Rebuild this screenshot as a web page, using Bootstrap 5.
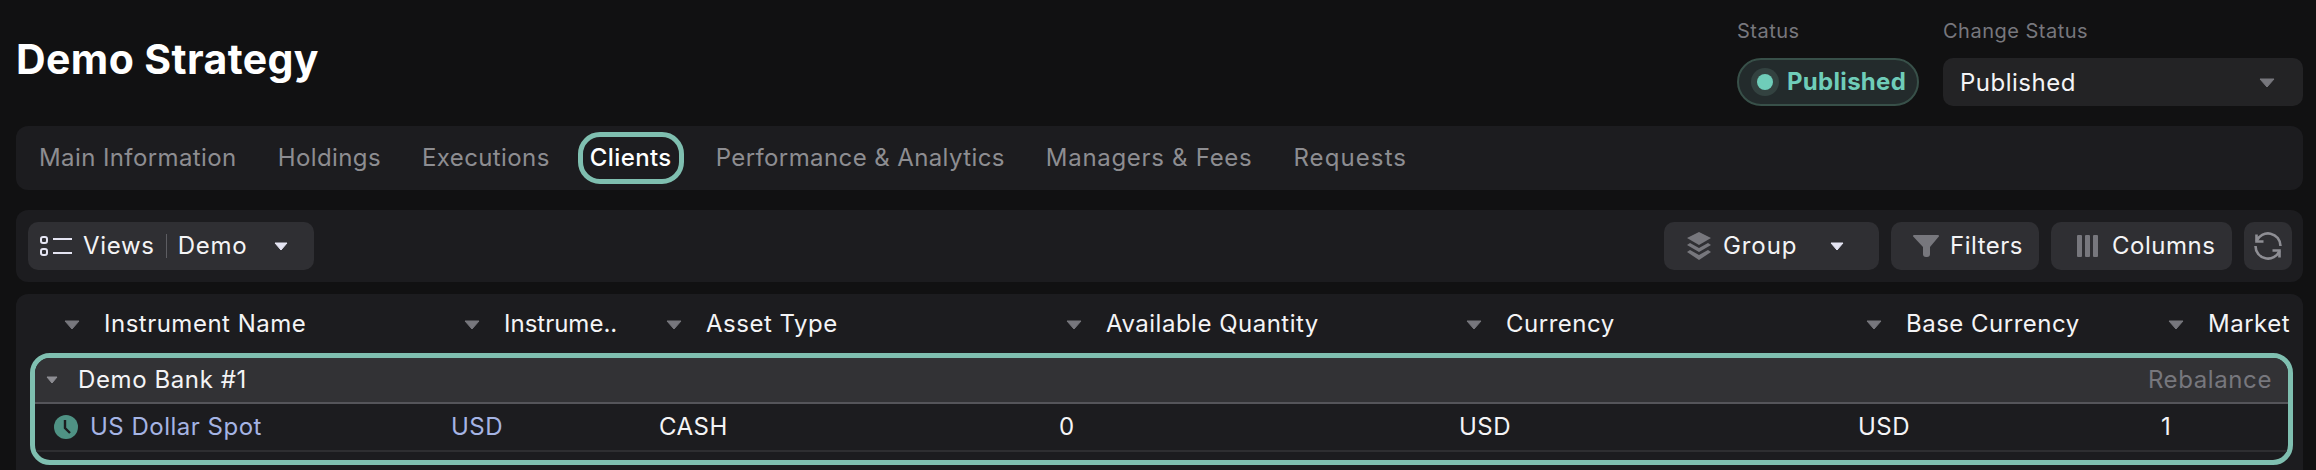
<!doctype html>
<html lang="en" data-bs-theme="dark">
<head>
<meta charset="utf-8">
<title>Demo Strategy</title>
<link href="https://cdn.jsdelivr.net/npm/bootstrap@5.3.0/dist/css/bootstrap.min.css" rel="stylesheet">
<style>
html,body{height:470px;overflow:hidden;background:#111112;}
body{font-family:Inter,"Liberation Sans",sans-serif;font-size:24px;color:#f4f4f6;padding:0 13px 0 16px;letter-spacing:.5px;}
a{text-decoration:none;}
.page-top{height:126px;}
.page-title{font-size:41px;font-weight:700;color:#fff;margin:0;letter-spacing:.4px;line-height:1;padding-left:0;margin-top:39px;}
.field-label{font-size:20px;line-height:24px;color:#77777d;margin-top:19px;margin-bottom:15px;}
.status-pill{width:182px;height:48px;border:2px solid #385049;border-radius:24px;background:#232b2c;color:#6fcdb9;font-weight:700;font-size:24px;padding-left:12px;gap:8px;letter-spacing:.3px;}
.status-ring{width:28px;height:28px;border-radius:50%;background:#334240;}
.status-dot{width:16px;height:16px;border-radius:50%;background:#6fcdb9;}
.status-select{width:360px;height:48px;background:#232325;border-radius:10px;padding:2px 28px 0 17px;}
.tab-bar{height:64px;background:#1c1c1f;border-radius:12px;padding-left:11px;margin-bottom:20px;}
.tab-item{padding:0 7px;margin-right:17px;color:#8d8d91;font-size:24px;height:52px;border:5px solid transparent;border-radius:22px;line-height:42px;letter-spacing:.4px;}
.tab-item.tab-on{border-color:#7fbfb0;color:#fff;font-weight:500;margin-left:-1px;margin-right:20px;}
.tab-item.tab-wide{letter-spacing:.7px;}
.tab-item.tab-wider{letter-spacing:1.1px;}
.tool-bar{height:72px;background:#1c1c1f;border-radius:12px;padding:0 11px 0 12px;margin-bottom:12px;}
.tool-btn{height:48px;background:#2f2f33;border-radius:10px;color:#f4f4f6;font-size:24px;}
.tool-views{width:286px;padding-left:12px;letter-spacing:.7px;}
.tool-views .views-icon{margin-right:11px;}
.tool-sep{width:1px;height:24px;background:#5d5d62;margin:0 11px;}
.tool-views .views-caret{margin-left:27px;}
.tool-group{width:215px;padding-left:22px;letter-spacing:.9px;}
.tool-group .group-icon{margin-right:11px;}
.tool-group .group-caret{margin-left:33px;}
.tool-filter{width:148px;padding-left:22px;}
.tool-filter svg{margin-right:11px;}
.tool-cols{width:181px;padding-left:26px;}
.tool-cols svg{margin-right:14px;}
.tool-refresh{width:48px;}
.table-box{height:176px;background:#1c1c1f;border-radius:12px 12px 0 0;}
.head-grid{height:59px;display:grid;grid-template-columns:400px 202px 400px 400px 400px 302px 1fr;padding-left:48px;}
.head-cell{white-space:nowrap;}
.head-cell svg{margin-right:24px;}
.head-tight{letter-spacing:0;}
.group-frame{margin:0 10px 0 14px;height:112px;border:5px solid #7fbfb0;border-radius:20px;overflow:hidden;}
.group-head{height:46px;background:#323235;border-bottom:2px solid #55555a;padding:0 16px 0 11px;letter-spacing:.6px;}
.group-head svg{margin-right:20px;}
.group-end{color:#77777d;}
.body-grid{height:48px;display:grid;grid-template-columns:397px 208px 400px 400px 399px 303px 1fr;padding-left:19px;border-bottom:2px solid #2e2e31;}
.body-grid svg{margin-right:12px;}
.inst-link{color:#a5b4e4;}
</style>
</head>
<body>
<div class="page-top d-flex justify-content-between">
  <h1 class="page-title">Demo Strategy</h1>
  <div class="d-flex" style="gap:24px">
    <div>
      <div class="field-label">Status</div>
      <div class="status-pill d-flex align-items-center">
        <span class="status-ring d-flex align-items-center justify-content-center"><span class="status-dot"></span></span>
        <span>Published</span>
      </div>
    </div>
    <div>
      <div class="field-label">Change Status</div>
      <div class="status-select d-flex align-items-center justify-content-between">
        <span>Published</span>
        <svg width="16" height="10" viewBox="0 0 16 10"><path d="M1 1h14L8 9z" fill="#77777d" stroke="#77777d" stroke-linejoin="round"/></svg>
      </div>
    </div>
  </div>
</div>

<nav class="tab-bar nav align-items-center">
  <a class="tab-item">Main Information</a>
  <a class="tab-item">Holdings</a>
  <a class="tab-item">Executions</a>
  <a class="tab-item tab-on">Clients</a>
  <a class="tab-item">Performance &amp; Analytics</a>
  <a class="tab-item tab-wide">Managers &amp; Fees</a>
  <a class="tab-item tab-wider">Requests</a>
</nav>

<div class="tool-bar d-flex align-items-center justify-content-between">
  <div class="tool-btn tool-views d-flex align-items-center">
    <svg class="views-icon" width="32" height="24" viewBox="0 0 32 24" fill="none" stroke="#e4e4f2" stroke-width="2"><rect x="1" y="3" width="6" height="6" rx="2"/><rect x="1" y="15" width="6" height="6" rx="2"/><path d="M13 5h19M13 19h19"/></svg>
    <span>Views</span><span class="tool-sep"></span><span>Demo</span>
    <svg class="views-caret" width="14" height="9" viewBox="0 0 14 9"><path d="M1 1h12L7 8z" fill="#e4e4f2" stroke="#e4e4f2" stroke-linejoin="round"/></svg>
  </div>
  <div class="d-flex" style="gap:12px">
    <div class="tool-btn tool-group d-flex align-items-center">
      <svg class="group-icon" width="26" height="28" viewBox="0 0 26 28" fill="#77777d"><path d="M13 0l12 6-12 7L1 6z"/><path d="M4 11l9 5 9-5 3 2-12 7-12-7z"/><path d="M4 18l9 5 9-5 3 2-12 8-12-8z"/></svg>
      <span>Group</span>
      <svg class="group-caret" width="14" height="9" viewBox="0 0 14 9"><path d="M1 1h12L7 8z" fill="#e4e4f2" stroke="#e4e4f2" stroke-linejoin="round"/></svg>
    </div>
    <div class="tool-btn tool-filter d-flex align-items-center">
      <svg width="26" height="22" viewBox="0 0 26 22" fill="#77777d"><path d="M1 0h24a1 1 0 0 1 .8 1.600L17 12v7a3 3 0 0 1-3 3h-1a3 3 0 0 1-3-3v-7L.2 1.600A1 1 0 0 1 1 0z"/></svg>
      <span>Filters</span>
    </div>
    <div class="tool-btn tool-cols d-flex align-items-center">
      <svg width="21" height="22" viewBox="0 0 21 22" fill="#77777d"><rect width="5" height="22" rx="1"/><rect x="8" width="5" height="22" rx="1"/><rect x="16" width="5" height="22" rx="1"/></svg>
      <span>Columns</span>
    </div>
    <div class="tool-btn tool-refresh d-flex align-items-center justify-content-center">
      <svg width="28" height="28" viewBox="0 0 28 28" fill="none" stroke="#8e8e94" stroke-width="2.600"><path d="M1.500 14A12.500 12.500 0 0 0 25.500 19"/><path d="M26.500 14A12.500 12.500 0 0 0 2.500 9"/><path d="M2.500 2.500v7h7"/><path d="M25.500 25.500v-7h-7"/></svg>
    </div>
  </div>
</div>

<div class="table-box">
  <div class="head-grid align-items-center">
    <div class="head-cell"><svg width="16" height="10" viewBox="0 0 16 10"><path d="M1 1h14L8 9z" fill="#77777d" stroke="#77777d" stroke-linejoin="round"/></svg>Instrument Name</div>
    <div class="head-cell head-tight"><svg width="16" height="10" viewBox="0 0 16 10"><path d="M1 1h14L8 9z" fill="#77777d" stroke="#77777d" stroke-linejoin="round"/></svg>Instrume..</div>
    <div class="head-cell"><svg width="16" height="10" viewBox="0 0 16 10"><path d="M1 1h14L8 9z" fill="#77777d" stroke="#77777d" stroke-linejoin="round"/></svg>Asset Type</div>
    <div class="head-cell"><svg width="16" height="10" viewBox="0 0 16 10"><path d="M1 1h14L8 9z" fill="#77777d" stroke="#77777d" stroke-linejoin="round"/></svg>Available Quantity</div>
    <div class="head-cell"><svg width="16" height="10" viewBox="0 0 16 10"><path d="M1 1h14L8 9z" fill="#77777d" stroke="#77777d" stroke-linejoin="round"/></svg>Currency</div>
    <div class="head-cell"><svg width="16" height="10" viewBox="0 0 16 10"><path d="M1 1h14L8 9z" fill="#77777d" stroke="#77777d" stroke-linejoin="round"/></svg>Base Currency</div>
    <div class="head-cell"><svg width="16" height="10" viewBox="0 0 16 10"><path d="M1 1h14L8 9z" fill="#77777d" stroke="#77777d" stroke-linejoin="round"/></svg>Market</div>
  </div>
  <div class="group-frame">
    <div class="group-head d-flex align-items-center justify-content-between">
      <div class="d-flex align-items-center">
        <svg width="12" height="8" viewBox="0 0 12 8"><path d="M1 1h10L6 7z" fill="#8d8d93" stroke="#8d8d93" stroke-linejoin="round"/></svg>
        <span>Demo Bank #1</span>
      </div>
      <span class="group-end">Rebalance</span>
    </div>
    <div class="body-grid align-items-center">
      <div class="d-flex align-items-center">
        <svg width="24" height="24" viewBox="0 0 24 24"><circle cx="12" cy="12" r="12" fill="#4f9284"/><path d="M11 5v8l5 5" fill="none" stroke="#1c1c1f" stroke-width="2.400"/></svg>
        <a class="inst-link">US Dollar Spot</a>
      </div>
      <a class="inst-link">USD</a>
      <div>CASH</div>
      <div>0</div>
      <div>USD</div>
      <div>USD</div>
      <div>1</div>
    </div>
  </div>
</div>
<script src="https://cdn.jsdelivr.net/npm/bootstrap@5.3.0/dist/js/bootstrap.bundle.min.js"></script>
</body>
</html>
